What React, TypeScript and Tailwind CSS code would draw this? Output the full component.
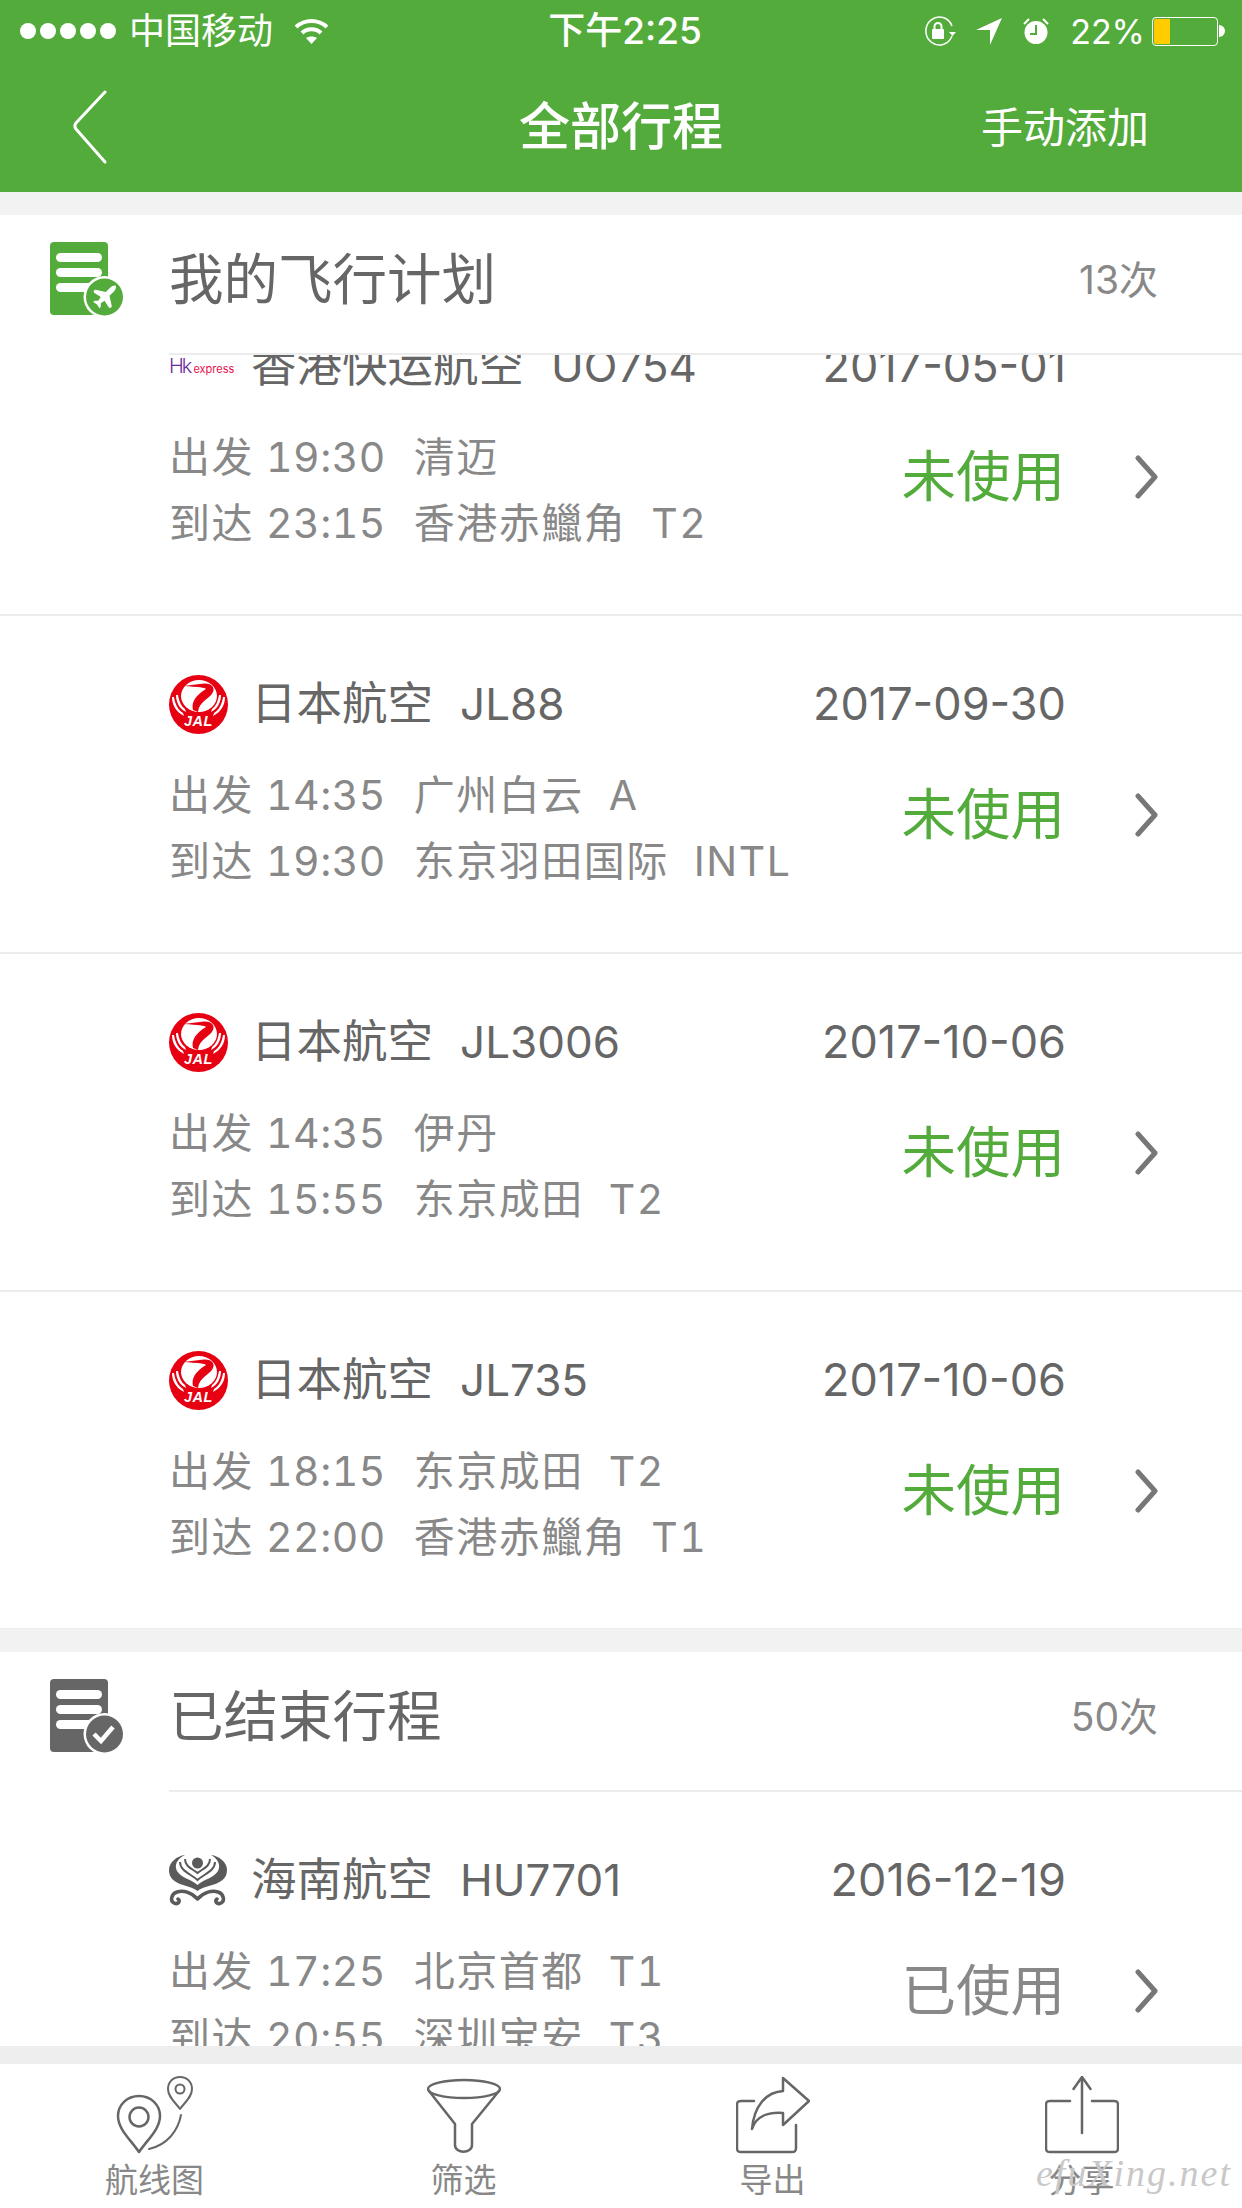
import React from 'react';

interface Trip {
  airline: string;
  logo: 'hk' | 'jal' | 'hainan';
  flight: string;
  date: string;
  depart: string[];
  arrive: string[];
  used?: boolean;
}

const upcoming: Trip[] = [
  { airline: '香港快运航空', logo: 'hk', flight: 'UO754', date: '2017-05-01', depart: ['19:30', '清迈'], arrive: ['23:15', '香港赤鱲角', 'T2'] },
  { airline: '日本航空', logo: 'jal', flight: 'JL88', date: '2017-09-30', depart: ['14:35', '广州白云', 'A'], arrive: ['19:30', '东京羽田国际', 'INTL'] },
  { airline: '日本航空', logo: 'jal', flight: 'JL3006', date: '2017-10-06', depart: ['14:35', '伊丹'], arrive: ['15:55', '东京成田', 'T2'] },
  { airline: '日本航空', logo: 'jal', flight: 'JL735', date: '2017-10-06', depart: ['18:15', '东京成田', 'T2'], arrive: ['22:00', '香港赤鱲角', 'T1'] },
];

const finished: Trip[] = [
  { airline: '海南航空', logo: 'hainan', flight: 'HU7701', date: '2016-12-19', depart: ['17:25', '北京首都', 'T1'], arrive: ['20:55', '深圳宝安', 'T3'], used: true },
];

function JalLogo() {
  return (
    <svg width="59" height="59" viewBox="0 0 59 59">
      <circle cx="29.5" cy="29.5" r="29.5" fill="#e60012" />
      <ellipse cx="30" cy="21" rx="18" ry="16" fill="#fff" />
      <path d="M14 11l21-2.500c8-.5 11 4.500 9 8.500-3 7-14 9-15 20l-5-2c-2-8 3-15 13-21-1-1.500-7-2-23-3z" fill="#e60012" />
      <path d="M3 22c0 8 4 15 12 19l-1-3C9 35 6 29 5 22zM7 20c0 8 4 14 10 17l-1-3c-4-3-6-8-7-14zM56 22c0 8-4 15-12 19l1-3c5-3 8-9 9-16zM52 20c0 8-4 14-10 17l1-3c4-3 6-8 7-14z" fill="#fff" />
      <text x="29.5" y="51" textAnchor="middle" fill="#fff" fontSize="14.5" fontWeight="700" fontStyle="italic" fontFamily="Liberation Sans" letterSpacing="0.5">JAL</text>
    </svg>
  );
}

function HainanLogo() {
  return (
    <svg width="59" height="53" viewBox="0 0 59 53" fill="none" stroke="#5a5a5a">
      <circle cx="28.5" cy="9" r="5.5" fill="#5a5a5a" stroke="none" />
      <path d="M28.500 37C20 30 0 32 0 16 0 8 8 2 16 1 8 5 5 11 8 17c4 7 14 8 20.500 14C35 25 45 24 49 17c3-6 0-12-7-16 8 1 16 7 16 15 0 16-21 14-29.500 21z" fill="#5a5a5a" stroke="none" />
      <path d="M11 8c0 9 11 12 17.500 18C35 20 46 17 46 8M16 5c0 8 8 10 12.500 14C33 15 41 13 41 5" strokeWidth="2" />
      <path d="M28.500 45C22 38 14 36 8 38 2 40 1 47 5 49c4 2 7-2 4-4M28.500 45C35 38 43 36 49 38c6 2 7 9 3 11-4 2-7-2-4-4" strokeWidth="3.5" strokeLinecap="round" />
    </svg>
  );
}

function AirlineLogo({ kind }: { kind: Trip['logo'] }) {
  if (kind === 'jal') return <JalLogo />;
  if (kind === 'hainan') return <HainanLogo />;
  return (
    <div className="flex w-[59px] items-baseline leading-none">
      <span className="text-[20px] font-light tracking-[-2px] text-[#6a2aa0]">Hk</span>
      <span className="ml-[3px] text-[11px] text-[#e8114b]">express</span>
    </div>
  );
}

function TripRow({ trip }: { trip: Trip }) {
  return (
    <div className="h-[338px] border-b-2 border-[#ececec] pl-[169px] pt-[58px]">
      <div className="flex h-[60px] items-center pr-[176px] text-[#666]">
        <div className="mr-[23px] flex w-[59px] justify-start">
          <AirlineLogo kind={trip.logo} />
        </div>
        <span className="text-[45.5px]">{trip.airline}</span>
        <span className="ml-[27px] text-[44px]">{trip.flight}</span>
        <span className="ml-auto text-[45px]">{trip.date}</span>
      </div>
      <div className="mt-[29px] flex items-start">
        <div className="flex-1 text-[41px] tracking-[1.5px] text-[#888] tabular-nums">
          {[{ label: '出发', parts: trip.depart }, { label: '到达', parts: trip.arrive }].map((line) => (
            <div key={line.label} className="flex h-[66px] items-center">
              <span className="mr-[12px]">{line.label}</span>
              {line.parts.map((part, i) => (
                <span key={part} className={i === 0 ? 'mr-[28px] tracking-[0.5px]' : 'mr-[25px]'}>{part}</span>
              ))}
            </div>
          ))}
        </div>
        <div className="flex h-[104px] items-center pr-[83px]">
          <span className={trip.used ? 'text-[54.5px] text-[#888]' : 'text-[54.5px] text-[#53ab3b]'}>
            {trip.used ? '已使用' : '未使用'}
          </span>
          <svg className="ml-[70px]" width="24" height="46" viewBox="0 0 24 46" fill="none" stroke="#777" strokeWidth="5" strokeLinecap="round" strokeLinejoin="round">
            <path d="M3 4l17 19L3 42" />
          </svg>
        </div>
      </div>
    </div>
  );
}

function SectionHeader({ icon, title, count }: { icon: React.ReactNode; title: string; count: string }) {
  return (
    <div className="flex h-[138px] items-center bg-white pb-[8px] pl-[50px] pr-[84px]">
      <div className="w-[119px]">{icon}</div>
      <span className="text-[54.5px] text-[#666]">{title}</span>
      <span className="ml-auto text-[39px] text-[#888]">{count}</span>
    </div>
  );
}

function DocIcon({ color, children }: { color: string; children: React.ReactNode }) {
  return (
    <svg className="block" width="76" height="76" viewBox="0 0 76 76">
      <rect x="0" y="0" width="58" height="73" rx="4" fill={color} />
      <rect x="6" y="11" width="46" height="9" rx="4.5" fill="#fff" />
      <rect x="6" y="26" width="46" height="9" rx="4.5" fill="#fff" />
      <rect x="6" y="41" width="46" height="9" rx="4.5" fill="#fff" />
      <circle cx="54.5" cy="55" r="21" fill="#fff" />
      <circle cx="54.5" cy="55" r="18.5" fill={color} />
      {children}
    </svg>
  );
}

function StatusBar() {
  return (
    <div className="grid h-[62px] grid-cols-3 items-center text-white">
      <div className="flex items-center pl-[20px]">
        <div className="flex gap-[4px]">
          {[0, 1, 2, 3, 4].map((i) => (
            <span key={i} className="h-[16px] w-[16px] rounded-full bg-white" />
          ))}
        </div>
        <span className="ml-[13px] text-[36px]">中国移动</span>
        <svg className="ml-[21px]" width="35" height="27" viewBox="0 0 35 27" fill="none" stroke="#fff" strokeWidth="4">
          <path d="M2 9c9-8 22-8 31 0M8 15c5-5 14-5 19 0" />
          <path d="M12 20c3-2 8-2 11 0l-5.500 6z" fill="#fff" stroke="none" />
        </svg>
      </div>
      <div className="pl-[8px] text-center text-[37px] font-medium">下午2:25</div>
      <div className="flex items-center justify-end pr-[17px]">
        <svg width="34" height="30" viewBox="0 0 34 30" fill="none" stroke="#fff" strokeWidth="1.5">
          <path d="M29 20a13.500 14 0 1 1 0-10" />
          <path d="M26 16h7l-3.500 4z" fill="#fff" stroke="none" />
          <rect x="9" y="13" width="12" height="10" rx="1" fill="#fff" stroke="none" />
          <path d="M11.500 13v-2.500a3.500 3.500 0 0 1 7 0V13" strokeWidth="2" />
        </svg>
        <svg className="ml-[19px]" width="26" height="28" viewBox="0 0 26 28">
          <path d="M26 1L14 28V13H0z" fill="#fff" />
        </svg>
        <svg className="ml-[20px]" width="28" height="28" viewBox="0 0 28 28">
          <circle cx="14" cy="15.5" r="11.5" fill="#fff" />
          <path d="M2 7l5-5M26 7l-5-5" stroke="#fff" strokeWidth="2" />
          <path d="M14 8v9H8" fill="none" stroke="#53ab3b" strokeWidth="2" />
        </svg>
        <span className="ml-[20px] text-[34px]">22%</span>
        <div className="ml-[7px] flex items-center">
          <div className="h-[29px] w-[66px] rounded-[4px] border border-white p-[1px]">
            <div className="h-full w-[16px] rounded-l-[2px] bg-[#ffcc00]" />
          </div>
          <div className="ml-[1px] h-[12px] w-[6px] rounded-r-full bg-white" />
        </div>
      </div>
    </div>
  );
}

function NavBar() {
  return (
    <div className="grid h-[130px] grid-cols-[1fr_auto_1fr] items-center text-white">
      <div className="pl-[73px]">
        <svg className="block" width="34" height="74" viewBox="0 0 34 74" fill="none" stroke="#fff" strokeWidth="3" strokeLinecap="round" strokeLinejoin="round">
          <path d="M32 2L3 33c-1.500 2-1.500 4 0 6l29 33" />
        </svg>
      </div>
      <span className="text-[51px] font-medium">全部行程</span>
      <div className="pr-[93px] text-right">
        <span className="text-[42px]">手动添加</span>
      </div>
    </div>
  );
}

const tabIcon = { fill: 'none', stroke: '#666', strokeWidth: 2.5, strokeLinecap: 'round', strokeLinejoin: 'round' } as const;

const tabs = [
  {
    label: '航线图',
    icon: (
      <svg width="80" height="78" viewBox="0 0 80 78" {...tabIcon}>
        <path d="M24 76C15 63 3 53 3 40c0-11 9-20 21-20s21 9 21 20c0 13-12 23-21 36z" />
        <circle cx="24" cy="41" r="9.5" />
        <path d="M65 33c-5-7-12-12-12-20 0-7 5-12 12-12s12 5 12 12c0 8-7 13-12 20z" strokeWidth="2" />
        <circle cx="65" cy="13" r="4.5" strokeWidth="2" />
        <path d="M66 39c-3 16-14 30-32 34" strokeWidth="2" />
      </svg>
    ),
  },
  {
    label: '筛选',
    icon: (
      <svg width="74" height="78" viewBox="0 0 74 78" {...tabIcon}>
        <ellipse cx="37" cy="13" rx="36" ry="9" />
        <path d="M2 15l26 33v21c0 9 17 9 17 0V48l27-33" />
      </svg>
    ),
  },
  {
    label: '导出',
    icon: (
      <svg width="74" height="78" viewBox="0 0 74 78" {...tabIcon}>
        <path d="M18 25H5c-3 0-4 1-4 4v43c0 3 1 4 4 4h51c3 0 4-1 4-4V49" />
        <path d="M16 53c2-23 14-37 31-38V2l26 23-26 24V37c-14-1-27 3-31 16z" />
      </svg>
    ),
  },
  {
    label: '分享',
    icon: (
      <svg width="74" height="78" viewBox="0 0 74 78" {...tabIcon}>
        <path d="M25 25H5c-3 0-4 1-4 4v43c0 3 1 4 4 4h64c3 0 4-1 4-4V29c0-3-1-4-4-4H47" />
        <path d="M37 57V1M28.500 13L37 1l8.500 12" />
      </svg>
    ),
  },
];

function TabBar() {
  return (
    <div className="relative grid h-[144px] shrink-0 grid-cols-[repeat(4,309px)] bg-white pt-[12px]">
      {tabs.map((tab) => (
        <div key={tab.label} className="flex flex-col items-center">
          {tab.icon}
          <span className="mt-[7px] text-[33px] leading-[38px] text-[#888]">{tab.label}</span>
        </div>
      ))}
      {/* site watermark sits over the last tab */}
      <span className="absolute right-[10px] top-[90px] font-['Liberation_Serif',serif] text-[38px] italic leading-none tracking-[2px] text-[#c8c8c8]">
        efuXing.net
      </span>
    </div>
  );
}

export default function App() {
  return (
    <div className="flex h-[2208px] w-[1242px] flex-col overflow-hidden bg-[#f2f2f2] font-['Inter','Noto_Sans_CJK_SC',sans-serif]">
      <div className="h-[192px] shrink-0 bg-[#53ab3b]">
        <StatusBar />
        <NavBar />
      </div>

      <div className="h-[1854px] shrink-0 overflow-hidden pt-[23px]">
        <SectionHeader
          title="我的飞行计划"
          count="13次"
          icon={
            <DocIcon color="#53ab3b">
              <path transform="translate(39.5 40) scale(1.25)" d="M17.800 19.200 16 11l3.500-3.500C21 6 21.500 4 21 3c-1-.5-3 0-4.500 1.500L13 8 4.800 6.200c-.5-.1-.9.1-1.100.5l-.3.5c-.2.5-.1 1 .3 1.300L9 12l-2 3H4l-1 1 3 2 2 3 1-1v-3l3-2 3.500 5.300c.3.4.8.5 1.300.3l.5-.2c.4-.3.6-.7.5-1.200z" fill="#fff" />
            </DocIcon>
          }
        />
        <div className="bg-white pl-[169px]">
          <div className="h-[2px] bg-[#ececec]" />
        </div>
        <div className="h-[1274px] overflow-hidden bg-white">
          <div className="-mt-[77px]">
            {upcoming.map((trip) => (
              <TripRow key={trip.flight} trip={trip} />
            ))}
          </div>
        </div>

        <div className="mt-[23px]">
          <SectionHeader
            title="已结束行程"
            count="50次"
            icon={
              <DocIcon color="#666">
                <path d="M44 55l7 7 12-14" fill="none" stroke="#fff" strokeWidth="4.5" />
              </DocIcon>
            }
          />
          <div className="bg-white">
            <div className="ml-[169px] h-[2px] bg-[#ececec]" />
            {finished.map((trip) => (
              <TripRow key={trip.flight} trip={trip} />
            ))}
          </div>
        </div>
      </div>

      <div className="h-[18px] shrink-0 bg-[#eeeeee]" />
      <TabBar />
    </div>
  );
}
